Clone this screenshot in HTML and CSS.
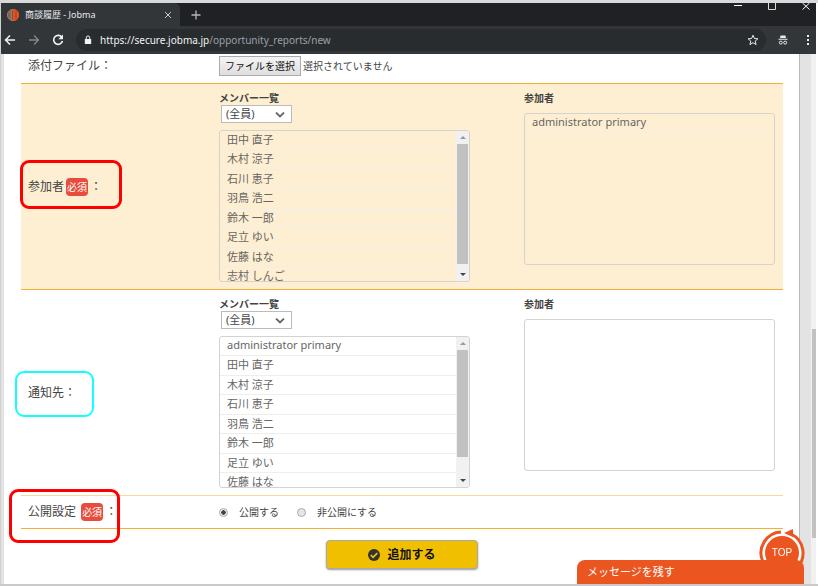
FILE: index.html
```html
<!DOCTYPE html>
<html lang="ja">
<head>
<meta charset="utf-8">
<title>商談履歴 - Jobma</title>
<link rel="stylesheet" href="styles.css">
</head>
<body>
<div class="browser">
  <header class="chrome">
    <div class="tabs">
      <div class="tab">
        <svg class="favicon" width="12" height="12" viewBox="0 0 12 12"><circle cx="6" cy="6" r="5.500" fill="#6d5a50" stroke="#c07a58"/><path d="M6 0a6 6 0 0 1 0 12z" fill="#e8501c"/><path d="M3 2v8M4.500 1v10" stroke="#a99384" stroke-width=".6"/><path d="M9 2v8" stroke="#a03a18" stroke-width=".8"/></svg>
        <span class="tab-title">商談履歴 - Jobma</span>
        <button class="bare" aria-label="タブを閉じる"><svg width="8" height="8" viewBox="0 0 8 8"><path d="M1 1l6 6M7 1L1 7" stroke="#c8cacc" fill="none"/></svg></button>
      </div>
      <button class="bare new-tab" aria-label="新しいタブ"><svg width="10" height="10" viewBox="0 0 10 10"><path d="M5 .5v9M.5 5h9" stroke="#b5b8bb" stroke-width="1.300"/></svg></button>
      <div class="window-buttons">
        <button class="bare" aria-label="最小化"><svg width="10" height="10" viewBox="0 0 10 10"><path d="M1 2.500h8" stroke="#fff"/></svg></button>
        <button class="bare" aria-label="最大化"><svg width="10" height="10" viewBox="0 0 10 10"><path d="M1.500 0v6.500h7V0" stroke="#ddd" fill="none"/></svg></button>
        <button class="bare" aria-label="閉じる"><svg width="10" height="10" viewBox="0 0 10 10"><path d="M1.500 0l7 6.500M8.500 0l-7 6.500" stroke="#fff" fill="none"/></svg></button>
      </div>
    </div>
    <div class="toolbar">
      <button class="bare" aria-label="戻る"><svg width="12" height="12" viewBox="0 0 12 12"><path d="M11 6H2M6 1.500L1.500 6 6 10.500" stroke="#f1f3f4" stroke-width="1.500" fill="none"/></svg></button>
      <button class="bare" aria-label="進む"><svg width="12" height="12" viewBox="0 0 12 12"><path d="M1 6h9M6 1.500L10.500 6 6 10.500" stroke="#85888b" stroke-width="1.300" fill="none"/></svg></button>
      <button class="bare" aria-label="再読み込み"><svg width="12" height="12" viewBox="0 0 12 12"><path d="M10 3.500A4.500 4.500 0 1 0 10.500 7" stroke="#f1f3f4" stroke-width="1.600" fill="none"/><path d="M11 .5v4.700H6.300z" fill="#f1f3f4"/></svg></button>
      <div class="address">
        <svg width="8" height="10" viewBox="0 0 8 10"><rect x=".8" y="4" width="6.400" height="5" rx=".6" fill="#f1f3f4"/><path d="M2.300 4V2.700a1.700 1.700 0 0 1 3.400 0V4" stroke="#f1f3f4" fill="none"/></svg>
        <span class="url"><span class="host">https://secure.jobma.jp</span>/opportunity_reports/new</span>
        <svg width="12" height="12" viewBox="0 0 12 12"><path d="M6 1.200l1.400 3.300 3.500.3-2.700 2.300.9 3.500L6 8.700l-3.100 1.900.9-3.500L1.100 4.800l3.500-.3z" stroke="#e8eaed" fill="none"/></svg>
      </div>
      <svg width="10" height="12" viewBox="0 0 10 12"><path d="M2.600 1.500h4.800l.6 2.500H2zM.5 4.800h9v1H.5z" fill="#e8eaed"/><circle cx="2.800" cy="8.600" r="1.500" stroke="#e8eaed" fill="none"/><circle cx="7.200" cy="8.600" r="1.500" stroke="#e8eaed" fill="none"/></svg>
      <button class="bare menu" aria-label="メニュー"><svg width="4" height="12" viewBox="0 0 4 12"><path d="M1 1h2v2H1zM1 5h2v2H1zM1 9h2v2H1z" fill="#e8eaed"/></svg></button>
    </div>
  </header>

  <div class="viewport">
    <form class="page">
      <div class="row file-row">
        <span class="label">添付ファイル：</span>
        <div class="file">
          <input class="visually-hidden" type="file" id="attachment">
          <label class="file-button" for="attachment">ファイルを選択</label>
          <span>選択されていません</span>
        </div>
      </div>

      <div class="row tinted">
        <div class="label marked mark-member">参加者<em class="required">必須</em>：</div>
        <div class="group">
          <label class="heading" for="filter1">メンバー一覧</label>
          <div class="filter"><select id="filter1"><option>(全員)</option></select><svg width="10" height="6" viewBox="0 0 10 6"><path d="M1 .5l4 4 4-4" stroke="#666" stroke-width="1.800" fill="none"/></svg></div>
          <div class="list">
            <select multiple aria-label="参加者の候補">
              <option>田中 直子</option><option>木村 涼子</option><option>石川 恵子</option><option>羽鳥 浩二</option><option>鈴木 一郎</option><option>足立 ゆい</option><option>佐藤 はな</option><option>志村 しんご</option>
            </select>
            <div class="scrollbar"><i class="up"></i><b class="thumb"></b><i class="down"></i></div>
          </div>
        </div>
        <div class="group chosen">
          <label class="heading" for="members">参加者</label>
          <div class="list"><select multiple id="members"><option>administrator primary</option></select></div>
        </div>
      </div>

      <div class="row pale-line">
        <div class="label marked mark-notify">通知先：</div>
        <div class="group">
          <label class="heading" for="filter2">メンバー一覧</label>
          <div class="filter"><select id="filter2"><option>(全員)</option></select><svg width="10" height="6" viewBox="0 0 10 6"><path d="M1 .5l4 4 4-4" stroke="#666" stroke-width="1.800" fill="none"/></svg></div>
          <div class="list">
            <select multiple aria-label="通知先の候補">
              <option>administrator primary</option><option>田中 直子</option><option>木村 涼子</option><option>石川 恵子</option><option>羽鳥 浩二</option><option>鈴木 一郎</option><option>足立 ゆい</option><option>佐藤 はな</option>
            </select>
            <div class="scrollbar"><i class="up"></i><b class="thumb long"></b><i class="down"></i></div>
          </div>
        </div>
        <div class="group chosen">
          <label class="heading" for="notified">参加者</label>
          <div class="list"><select multiple id="notified"></select></div>
        </div>
      </div>

      <div class="row publish-row">
        <div class="label marked mark-publish">公開設定 <em class="required">必須</em>：</div>
        <div class="radios">
          <label><input type="radio" name="publish" checked>公開する</label>
          <label><input type="radio" name="publish">非公開にする</label>
        </div>
      </div>

      <button class="submit" type="button">
        <svg width="12" height="12" viewBox="0 0 12 12"><circle cx="6" cy="6" r="6" fill="#333"/><path d="M2.800 6.200l2.300 2.200 4.200-4.300" stroke="#f0c000" stroke-width="1.700" fill="none"/></svg>
        追加する
      </button>
    </form>
    <div class="gutter"></div>
    <div class="page-scroll"><b></b></div>
  </div>
</div>

<a class="to-top" href="#" aria-label="TOP">
  <svg width="48" height="48" viewBox="0 0 48 48"><circle cx="24" cy="25" r="22" fill="#fff"/><circle cx="24" cy="25" r="17" fill="#eb5520"/><path d="M23 4A21 21 0 1 0 33 6" stroke="#eb5520" stroke-width="3" fill="none"/><path d="M26 5l9-4v8z" fill="#eb5520"/></svg>
  <span>TOP</span>
</a>
<button class="message" type="button">メッセージを残す</button>
</body>
</html>
```
FILE: styles.css
```css
*, *::before, *::after { box-sizing: border-box; }
body {
  margin: 0;
  background: #fff;
  color: #444;
  font: 12px/16px "Noto Sans", "Noto Sans CJK JP", sans-serif;
  overflow: hidden;
}
button, select, input { font: inherit; color: inherit; }
.bare { display: flex; padding: 0; border: 0; background: none; }
.visually-hidden { position: absolute; width: 1px; height: 1px; opacity: 0; }

.browser {
  display: flex;
  flex-direction: column;
  height: 100vh;
  border-top: 3px solid #d9d9d9;
  border-bottom: 2px solid #cacaca;
  border-left: 1px solid #d0d0d0;
  padding-right: 2px;
}
.tabs { display: flex; height: 23px; background: #202124; }
.tab {
  display: flex;
  align-items: center;
  gap: 6px;
  width: 179px;
  padding: 0 8px 0 6px;
  background: #323639;
  border-radius: 0 6px 0 0;
  color: #e8eaed;
  font-size: 9px;
}
.tab-title { flex: 1; }
.new-tab { align-items: center; margin-left: 11px; }
.window-buttons { display: flex; gap: 24px; margin-left: auto; padding-right: 5px; }
.toolbar {
  display: flex;
  align-items: center;
  gap: 12px;
  height: 28px;
  padding: 0 6px 0 3px;
  background: #323639;
}
.menu { margin-left: 6px; }
.address {
  display: flex;
  flex: 1;
  align-items: center;
  gap: 8px;
  height: 22px;
  padding: 0 7px 0 8px;
  border-radius: 11px;
  background: #282c2f;
  color: #9aa0a6;
  font-size: 10px;
}
.url { flex: 1; }
.host { color: #f1f3f4; }

.viewport { display: flex; flex: 1; min-height: 0; border-left: 3px solid #e3e3e3; }
.page { flex: 1; padding: 0 16px 0 17px; background: #fff; }
.gutter { width: 12px; border-left: 1px solid #bbb; background: #e3e3e3; }
.page-scroll { display: flex; flex-direction: column; width: 5px; background: #f1f1f1; }
.page-scroll::before { content: ""; flex: 275; }
.page-scroll b { flex: 209; margin-left: 1px; background: #c1c1c1; }
.page-scroll::after { content: ""; flex: 46; }

.row {
  display: grid;
  grid-template-columns: 198fr 305fr 259fr;
  align-items: center;
  border-bottom: 1px solid #f2b135;
}
.tinted { background: #ffefd2; }
.pale-line { border-color: #f9d998; }
.file-row { height: 30px; padding-bottom: 6px; }
.publish-row { height: 33px; }
.label { padding-left: 7px; }
.file { display: flex; align-items: center; gap: 2px; font-size: 10px; }
.file-button {
  padding: 1px 5px;
  border: 1px solid #aaa;
  background: linear-gradient(#f5f5f5, #dedede);
  color: #111;
}
.required {
  display: inline-block;
  margin: 0 2px;
  padding: 1px;
  border-radius: 4px;
  background: #e74c3c;
  color: #fff;
  font-size: 10px;
  font-style: normal;
}

/* Callout frames around the row labels */
.marked { position: relative; }
.marked::after { content: ""; position: absolute; border: 3px solid #f00; border-radius: 9px; }
.mark-member::after { inset: -18px auto -13px -1px; width: 102px; }
.mark-notify::after { inset: -14px auto -16px -6px; width: 79px; border: 2px solid #1ff; }
.mark-publish::after { inset: -14px auto -22px -12px; width: 111px; }

.group { align-self: start; padding: 7px 0; }
.heading { display: block; font-size: 10px; font-weight: bold; line-height: 14px; }
.filter { position: relative; width: 71px; height: 18px; margin-left: 2px; }
.filter select {
  display: block;
  width: 100%;
  height: 100%;
  padding: 0 4px;
  border: 1px solid #bbb;
  border-radius: 0;
  background: #fff;
  appearance: none;
  font-size: 11px;
}
.filter svg { position: absolute; right: 7px; top: 7px; pointer-events: none; }
.list {
  display: flex;
  width: 251px;
  height: 152px;
  margin-top: 7px;
  border: 1px solid #d5d3cf;
  border-radius: 3px;
  overflow: hidden;
}
.chosen .list { margin-top: 8px; }
.list select {
  flex: 1;
  height: 100%;
  padding: 0;
  border: 0;
  background: none;
  overflow: hidden;
  appearance: none;
  color: #666;
  font-size: 11px;
}
.list option {
  height: 20px;
  padding: 0 7px;
  line-height: 17px;
  border-bottom: 1px solid #f0eeea;
}
.list option:nth-child(odd) { height: 19px; }
.scrollbar { display: flex; flex-direction: column; align-items: center; width: 13px; background: #f1f1f1; }
.scrollbar i { height: 13px; display: flex; align-items: center; }
.scrollbar i::before { content: ""; border: 3px solid transparent; }
.up::before { border-bottom-color: #999 !important; border-top-width: 0 !important; }
.down::before { border-top-color: #444 !important; border-bottom-width: 0 !important; }
.thumb { width: 11px; height: 120px; margin-bottom: auto; background: #c1c1c1; }
.thumb.long { height: 107px; }

.radios { display: flex; gap: 18px; font-size: 10px; }
.radios label { display: flex; align-items: center; gap: 11px; }
.radios input {
  width: 9px;
  height: 9px;
  margin: 0;
  border: 1px solid #aaa;
  border-radius: 50%;
  background: #e6e6e6;
  appearance: none;
}
.radios input:checked { background: radial-gradient(#444 40%, #eee 50%); }

.submit {
  display: flex;
  align-items: center;
  justify-content: center;
  gap: 7px;
  width: 152px;
  height: 29px;
  margin: 11px auto 0;
  border: 1px solid #aaa;
  border-radius: 4px;
  background: #f0c000;
  box-shadow: 0 1px 2px #999;
  color: #111;
  font-weight: bold;
}
.to-top { position: fixed; right: 12px; bottom: 10px; width: 48px; height: 48px; color: #fff; text-decoration: none; }
.to-top span {
  position: absolute;
  inset: 17px 0 auto;
  text-align: center;
  font: 10px/16px "Liberation Sans", sans-serif;
}
.message {
  position: fixed;
  right: 14px;
  bottom: 2px;
  width: 227px;
  height: 24px;
  padding: 0 10px;
  border: 0;
  border-radius: 8px 8px 0 0;
  background: #eb5520;
  color: #fff;
  font-size: 11px;
  text-align: left;
}
```
